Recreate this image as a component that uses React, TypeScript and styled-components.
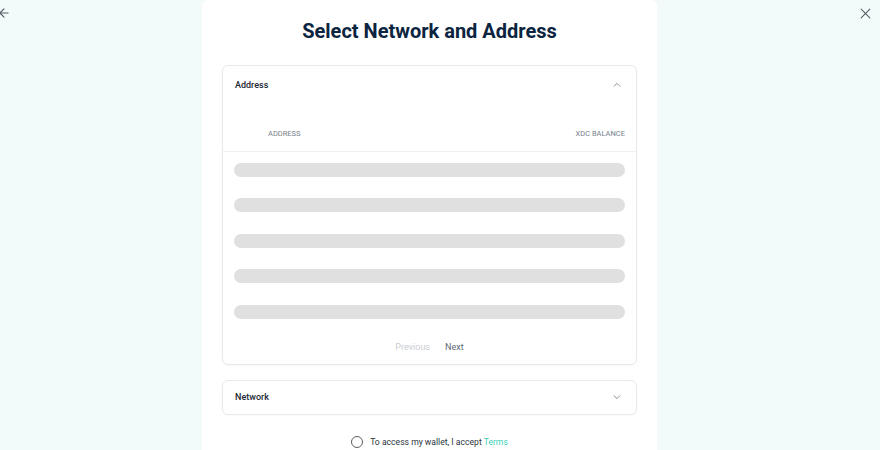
import React from 'react';
import styled, {createGlobalStyle} from "styled-components";

const GlobalStyle = createGlobalStyle`
  html, body {
    margin: 0;
    padding: 0;
    background: #f3fafa;
    font-family: Roboto, "Liberation Sans", sans-serif;
  }
`;

const SKELETON_ROWS = [0, 1, 2, 3, 4];

export default function App() {
    return (
        <StyledPage>
            <GlobalStyle/>
            <SideCell>
                <IconButton aria-label="back" $offset={-3}>
                    <svg width="14" height="14" viewBox="0 0 24 24" fill="none" stroke="#555c63" strokeWidth="2"
                         strokeLinecap="round" strokeLinejoin="round">
                        <path d="M19 12H5"/>
                        <path d="M12 19l-7-7 7-7"/>
                    </svg>
                </IconButton>
            </SideCell>

            <Card>
                <Title>Select Network and Address</Title>

                <Panel>
                    <PanelHeader>
                        <PanelLabel>Address</PanelLabel>
                        <Chevron $up/>
                    </PanelHeader>

                    <TableHead>
                        <ColTitle>Address</ColTitle>
                        <ColTitle>XDC Balance</ColTitle>
                    </TableHead>

                    {SKELETON_ROWS.map(i => (
                        <SkeletonRow key={i}>
                            <SkeletonBar/>
                        </SkeletonRow>
                    ))}

                    <Pagination>
                        <PageButton $disabled>Previous</PageButton>
                        <PageButton>Next</PageButton>
                    </Pagination>
                </Panel>

                <Panel $gap={15}>
                    <PanelHeader $height={33}>
                        <PanelLabel>Network</PanelLabel>
                        <Chevron/>
                    </PanelHeader>
                </Panel>

                <TermsRow>
                    <Radio/>
                    <span>To access my wallet, I accept <TermsLink>Terms</TermsLink></span>
                </TermsRow>
            </Card>

            <SideCell $right>
                <IconButton aria-label="close" $offset={0}>
                    <svg width="13" height="13" viewBox="0 0 24 24" fill="none" stroke="#555c63" strokeWidth="2"
                         strokeLinecap="round">
                        <path d="M4 4l16 16"/>
                        <path d="M20 4L4 20"/>
                    </svg>
                </IconButton>
            </SideCell>
        </StyledPage>
    );
}

const Chevron = ({$up}: { $up?: boolean }) => (
    <svg width="10" height="10" viewBox="0 0 24 24" fill="none" stroke="#6f7882" strokeWidth="2"
         strokeLinecap="round" strokeLinejoin="round">
        <path d={$up ? "M5 15l7-7 7 7" : "M5 9l7 7 7-7"}/>
    </svg>
);

const StyledPage = styled.div`
  display: grid;
  grid-template-columns: 202px 455px 1fr;
  min-height: 450px;
  overflow: hidden;
`;

const SideCell = styled.div<{ $right?: boolean }>`
  display: flex;
  justify-content: ${p => p.$right ? "flex-end" : "flex-start"};
  align-items: flex-start;
  padding-right: ${p => p.$right ? "8px" : "0"};
`;

const IconButton = styled.button<{ $offset: number }>`
  display: flex;
  align-items: center;
  justify-content: center;
  width: 14px;
  height: 14px;
  margin: 6px 0 0 ${p => p.$offset}px;
  padding: 0;
  border: none;
  background: transparent;
`;

const Card = styled.main`
  background: #fff;
  border-radius: 6px 6px 0 0;
  padding: 18px 20px 0;
  height: 450px;
  box-sizing: border-box;
`;

const Title = styled.h1`
  margin: 0 0 21px;
  text-align: center;
  font-size: 20px;
  line-height: 26px;
  font-weight: 700;
  color: #0b2440;
`;

const Panel = styled.section<{ $gap?: number }>`
  border: 1px solid #e6eaec;
  border-radius: 6px;
  margin-top: ${p => p.$gap ?? 0}px;
  box-shadow: 0 1px 2px rgba(0, 0, 0, 0.03);
`;

const PanelHeader = styled.div<{ $height?: number }>`
  display: flex;
  align-items: center;
  justify-content: space-between;
  height: ${p => p.$height ?? 37}px;
  padding: 0 14px 0 12px;
`;

const PanelLabel = styled.span`
  font-size: 9px;
  font-weight: 500;
  color: #1c2833;
`;

const TableHead = styled.div`
  display: flex;
  justify-content: space-between;
  align-items: center;
  height: 36px;
  margin-top: 12px;
  padding: 0 11px 0 45px;
  border-bottom: 1px solid #eef0f2;
`;

const ColTitle = styled.span`
  font-size: 7.5px;
  text-transform: uppercase;
  color: #77818c;
`;

const SkeletonRow = styled.div`
  display: flex;
  align-items: center;
  height: 35.5px;
  padding: 0 11px 0 11px;
`;

const SkeletonBar = styled.div`
  flex: 1;
  height: 14px;
  border-radius: 7px;
  background: #e0e0e0;
`;

const Pagination = styled.div`
  display: flex;
  justify-content: center;
  align-items: center;
  gap: 15px;
  height: 34px;
`;

const PageButton = styled.span<{ $disabled?: boolean }>`
  font-size: 9px;
  color: ${p => p.$disabled ? "#c9cdd2" : "#5f6974"};
`;

const TermsRow = styled.div`
  display: flex;
  justify-content: center;
  align-items: center;
  gap: 7px;
  margin-top: 21px;
  font-size: 8.6px;
  color: #2a343d;
`;

const Radio = styled.span`
  width: 10px;
  height: 10px;
  border: 1.5px solid #5a5f64;
  border-radius: 50%;
`;

const TermsLink = styled.a`
  color: #3ccfb4;
`;
